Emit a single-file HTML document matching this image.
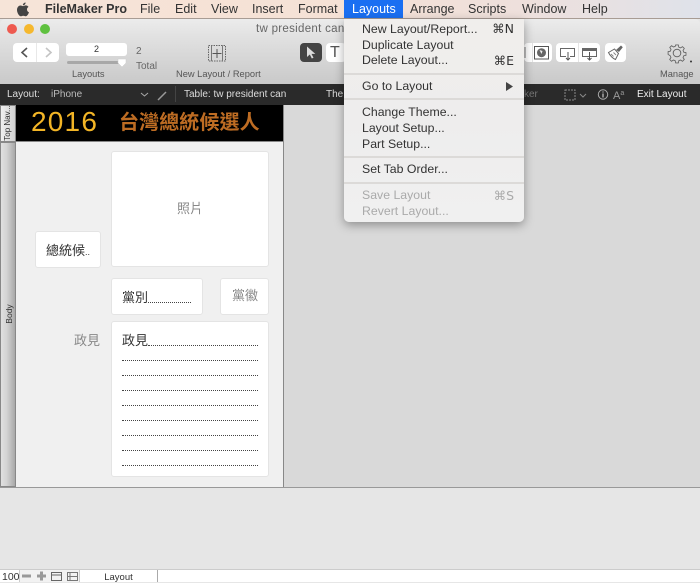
<!DOCTYPE html>
<html><head><meta charset="utf-8">
<style>
html,body{margin:0;padding:0}
body{width:700px;height:582px;position:relative;overflow:hidden;background:#e6e6e6;font-family:"Liberation Sans","Noto Sans CJK TC",sans-serif;}
.a{position:absolute;white-space:nowrap}
.m{position:absolute;top:2px;font-size:12.500px;line-height:15px;color:#333;white-space:nowrap}
.i{position:absolute;left:18px;font-size:12.300px;line-height:15px;color:#333;white-space:nowrap}
.d{color:#aaa}
.s{position:absolute;right:10px;font-size:12.500px;line-height:15px;color:#333;font-family:"DejaVu Sans","Liberation Sans",sans-serif}
.sep{position:absolute;left:0;width:180px;height:2px;background:#dcdad8}
.box{position:absolute;background:#fff;border:1px solid #e4e4e4;border-radius:3px;box-sizing:border-box}
.cj{font-family:"Liberation Sans","Noto Sans CJK TC",sans-serif}
.dots{position:absolute;height:0;border-top:1px dotted #444;}
.tb{position:absolute;background:#fff;border-radius:4px}
</style></head>
<body>
<!-- menu bar -->
<div class="a" style="left:0;top:0;width:700px;height:18px;background:linear-gradient(90deg,#f6e4d8,#f5e1d5 50%,#eee0dc 75%,#dfe2ea)"></div>
<div class="a" style="left:0;top:18px;width:700px;height:1px;background:#a89c94"></div>
<svg class="a" style="left:16px;top:2px" width="14" height="15" viewBox="0 0 14 15"><path d="M9.600 0.500c0.100 1.300-1.100 2.900-2.700 2.800C6.700 1.900 8.100 0.600 9.600 0.500zM7 4.100c0.800 0 1.500-0.700 2.800-0.700 1 0 2 0.500 2.700 1.500-2.300 1.300-1.900 4.500 0.500 5.500-0.600 1.500-1.800 3.900-3.200 3.900-1 0-1.300-0.600-2.500-0.600-1.200 0-1.600 0.600-2.500 0.600C3.200 14.300 1 10.800 1 8c0-2.800 1.800-4.500 3.500-4.500 1 0 1.800 0.600 2.500 0.600z" fill="#444"/></svg>
<div class="m" style="left:45px;font-weight:bold">FileMaker Pro</div>
<div class="m" style="left:140px">File</div>
<div class="m" style="left:175px">Edit</div>
<div class="m" style="left:211px">View</div>
<div class="m" style="left:252px">Insert</div>
<div class="m" style="left:298px">Format</div>
<div class="a" style="left:344px;top:0;width:59px;height:18px;background:#1a6ff2"></div>
<div class="m" style="left:352px;color:#fff">Layouts</div>
<div class="m" style="left:410px">Arrange</div>
<div class="m" style="left:468px">Scripts</div>
<div class="m" style="left:522px">Window</div>
<div class="m" style="left:582px">Help</div>

<!-- toolbar -->
<div class="a" style="left:0;top:19px;width:700px;height:65px;background:linear-gradient(#ececec,#e2e2e2 25%,#c9c9c9);border-radius:5px 5px 0 0"></div>
<div class="a" style="left:7px;top:24px;width:10px;height:10px;border-radius:50%;background:#ee5a50"></div>
<div class="a" style="left:24px;top:24px;width:10px;height:10px;border-radius:50%;background:#f5b82e"></div>
<div class="a" style="left:40px;top:24px;width:10px;height:10px;border-radius:50%;background:#5fc13f"></div>
<div class="a" style="left:256px;top:22px;font-size:11.500px;line-height:14px;color:#666;letter-spacing:.3px">tw president cand</div>

<div class="tb" style="left:13px;top:43px;width:46px;height:19px"></div>
<div class="a" style="left:36px;top:43px;width:1px;height:19px;background:#e8e8e8"></div>
<svg class="a" style="left:13px;top:43px" width="46" height="19"><path d="M14 5l-5 4.500 5 4.500" fill="none" stroke="#555" stroke-width="1.600"/><path d="M33 5l5 4.500-5 4.500" fill="none" stroke="#c4c4c4" stroke-width="1.600"/></svg>
<div class="tb" style="left:66px;top:43px;width:61px;height:13px;border-radius:3px"></div>
<div class="a" style="left:66px;top:44px;width:61px;text-align:center;font-size:9px;line-height:11px;color:#333">2</div>
<div class="a" style="left:67px;top:61px;width:55px;height:3px;background:#a8a8a8;border-radius:2px"></div>
<svg class="a" style="left:117px;top:58px" width="10" height="10"><path d="M1 1h8v4l-4 4-4-4z" fill="#fff" stroke="#ccc" stroke-width=".5"/></svg>
<div class="a" style="left:136px;top:44px;font-size:10px;line-height:15px;color:#666">2<br>Total</div>
<div class="a" style="left:72px;top:68px;font-size:9.300px;line-height:12px;color:#555">Layouts</div>
<svg class="a" style="left:208px;top:45px" width="19" height="17"><rect x=".5" y=".5" width="17" height="15.500" fill="none" stroke="#666" stroke-dasharray="1.500 1"/><path d="M3.500 .5v15.500M14.500 .5v15.500" stroke="#777" fill="none"/><path d="M9 4v9M4.500 8.500h9" stroke="#555" fill="none"/></svg>
<div class="a" style="left:176px;top:68px;font-size:9.300px;line-height:12px;color:#555">New Layout / Report</div>

<div class="a" style="left:300px;top:43px;width:22px;height:19px;background:#444;border-radius:4px"></div>
<svg class="a" style="left:300px;top:43px" width="22" height="19"><path d="M7 3.500v10.500l2.800-2.500 2 4 1.700-.8-2-3.800h3.800z" fill="#ddd"/></svg>
<div class="tb" style="left:326px;top:43px;width:20px;height:19px"></div>
<div class="a" style="left:330px;top:43px;font-size:16px;line-height:19px;color:#555">T</div>

<div class="tb" style="left:524px;top:43px;width:28px;height:19px"></div>
<div class="a" style="left:532px;top:43px;width:1px;height:19px;background:#e4e4e4"></div>
<svg class="a" style="left:524px;top:43px" width="28" height="19"><path d="M1 4v11" stroke="#777" fill="none"/><rect x="10.500" y="3.500" width="14" height="12.500" fill="none" stroke="#555"/><circle cx="17.500" cy="9.700" r="4.500" fill="#666"/><path d="M15.500 7l3 1-1 3z" fill="#eee"/></svg>
<div class="tb" style="left:556px;top:43px;width:44px;height:19px"></div>
<div class="a" style="left:578px;top:43px;width:1px;height:19px;background:#e4e4e4"></div>
<svg class="a" style="left:556px;top:43px" width="44" height="19"><path d="M14 13.500h4.500v-8h-14v8H10" fill="none" stroke="#666"/><path d="M12 9v8M10 15l2 2 2-2" fill="none" stroke="#555"/><rect x="26.500" y="5.500" width="14" height="8" fill="none" stroke="#666"/><rect x="26.500" y="5.500" width="14" height="2.500" fill="#666"/><path d="M33.500 9v8M31.500 15l2 2 2-2" fill="none" stroke="#555"/></svg>
<div class="tb" style="left:605px;top:43px;width:21px;height:19px"></div>
<svg class="a" style="left:605px;top:43px" width="21" height="19"><path d="M3.500 9.500l6-3.500 4 4.500-3 6c-2.500-.8-5.500-3.800-7-7z" fill="none" stroke="#666"/><path d="M11 7l5-4.500 1.800 1.700L14 9z" fill="#666"/><path d="M6 11l2.500 2.500M8.500 9.500l2.500 2.500" stroke="#888"/></svg>

<svg class="a" style="left:667px;top:43px" width="26" height="22" viewBox="0 0 26 22"><circle cx="10" cy="10" r="3.800" fill="none" stroke="#666"/><path d="M8.500 1h3l.5 2.500 2 .8 2.200-1.400 2 2-1.400 2.200.8 2 2.500.5v3l-2.500.5-.8 2 1.400 2.200-2 2-2.200-1.400-2 .8-.5 2.500h-3l-.5-2.500-2-.8-2.200 1.400-2-2 1.400-2.200-.8-2L0 11.500v-3l2.500-.5.8-2-1.400-2.200 2-2 2.200 1.400 2-.8z" transform="translate(1.100 1.100) scale(.89)" fill="none" stroke="#666"/><circle cx="24" cy="18.500" r="1" fill="#333"/></svg>
<div class="a" style="left:660px;top:68px;font-size:9.300px;line-height:12px;color:#555">Manage</div>

<!-- dark bar -->
<div class="a" style="left:0;top:84px;width:700px;height:21px;background:#2a2a2a"></div>
<div class="a" style="left:7px;top:89px;font-size:10px;line-height:12px;color:#ddd">Layout:</div>
<div class="a" style="left:51px;top:89px;font-size:10px;line-height:12px;color:#bbb">iPhone</div>
<svg class="a" style="left:140px;top:88px" width="30" height="14"><path d="M1 5l3.500 3 3.500-3" fill="none" stroke="#aaa"/><path d="M18 12l8-8" stroke="#999" stroke-width="1.500"/></svg>
<div class="a" style="left:175px;top:86px;width:1px;height:16px;background:#444"></div>
<div class="a" style="left:184px;top:89px;font-size:10px;line-height:12px;color:#ddd">Table: tw president can</div>
<div class="a" style="left:326px;top:89px;font-size:10px;line-height:12px;color:#ddd">The</div>
<div class="a" style="left:524px;top:89px;font-size:10px;line-height:12px;color:#777">ker</div>
<svg class="a" style="left:564px;top:88px" width="26" height="14"><rect x="1" y="2" width="10" height="10" fill="none" stroke="#888" stroke-dasharray="2 1"/><path d="M16 6l3 3 3-3" fill="none" stroke="#888"/></svg>
<svg class="a" style="left:597px;top:88px" width="12" height="13"><circle cx="6" cy="6.500" r="4.700" fill="none" stroke="#aaa"/><path d="M6 5.500v4M6 3.500v1" stroke="#bbb" stroke-width="1.300"/></svg>
<div class="a" style="left:613px;top:87px;font-size:11px;line-height:14px;color:#999">A<span style="font-size:7px;vertical-align:4px">a</span></div>
<div class="a" style="left:637px;top:89px;font-size:10px;line-height:12px;color:#eee">Exit Layout</div>

<!-- canvas -->
<div class="a" style="left:0;top:105px;width:700px;height:383px;background:#d9d9d9"></div>
<div class="a" style="left:0;top:488px;width:700px;height:82px;background:#e6e6e6"></div>
<div class="a" style="left:0;top:487px;width:700px;height:1px;background:#999"></div>
<!-- part tabs -->
<div class="a" style="left:0;top:105px;width:16px;height:37px;background:linear-gradient(90deg,#f0f0f0,#d0d0d0);border:1px solid #888;box-sizing:border-box"></div>
<div class="a" style="left:0;top:142px;width:16px;height:345px;background:linear-gradient(90deg,#e0e0e0,#d4d4d4 40%,#a8a8a8);border:1px solid #888;box-sizing:border-box"></div>
<div class="a" style="left:-12px;top:118px;width:40px;text-align:center;transform:rotate(-90deg);font-size:8px;line-height:10px;color:#333;">Top Nav...</div>
<div class="a" style="left:-11px;top:309px;width:40px;text-align:center;transform:rotate(-90deg);font-size:8.500px;line-height:10px;color:#333;">Body</div>
<!-- layout -->
<div class="a" style="left:16px;top:105px;width:267px;height:382px;background:#f0f0f0;border-right:1px solid #888;box-sizing:content-box"></div>
<div class="a" style="left:16px;top:105px;width:267px;height:36px;background:#000"></div>
<div class="a" style="left:16px;top:141px;width:267px;height:1px;background:#888"></div>
<div class="a" style="left:31px;top:105px;font-size:28px;line-height:34px;color:#f3b526;letter-spacing:1.200px">2016</div>
<div class="a cj" style="left:119px;top:110px;font-size:20px;line-height:27px;color:#bd6c23;font-weight:bold;letter-spacing:.1px">台灣總統候選人</div>

<div class="box" style="left:111px;top:151px;width:158px;height:116px"></div>
<div class="a cj" style="left:177px;top:200px;font-size:13px;line-height:18px;color:#888">照片</div>
<div class="box" style="left:35px;top:231px;width:66px;height:37px"></div>
<div class="a cj" style="left:46px;top:242px;font-size:13px;line-height:18px;color:#333">總統候<span style="font-size:9px">..</span></div>
<div class="box" style="left:111px;top:278px;width:92px;height:37px"></div>
<div class="a cj" style="left:122px;top:289px;font-size:13px;line-height:18px;color:#333">黨別</div>
<div class="dots" style="left:148px;top:302px;width:43px"></div>
<div class="box" style="left:220px;top:278px;width:49px;height:37px"></div>
<div class="a cj" style="left:232px;top:287px;font-size:13px;line-height:18px;color:#888">黨徽</div>
<div class="a cj" style="left:74px;top:332px;font-size:13px;line-height:18px;color:#888">政見</div>
<div class="box" style="left:111px;top:321px;width:158px;height:156px"></div>
<div class="a cj" style="left:122px;top:332px;font-size:13px;line-height:18px;color:#333">政見</div>
<div class="dots" style="left:148px;top:345px;width:110px"></div>
<div class="dots" style="left:122px;top:360px;width:136px"></div>
<div class="dots" style="left:122px;top:375px;width:136px"></div>
<div class="dots" style="left:122px;top:390px;width:136px"></div>
<div class="dots" style="left:122px;top:405px;width:136px"></div>
<div class="dots" style="left:122px;top:420px;width:136px"></div>
<div class="dots" style="left:122px;top:435px;width:136px"></div>
<div class="dots" style="left:122px;top:450px;width:136px"></div>
<div class="dots" style="left:122px;top:465px;width:136px"></div>

<!-- status bar -->
<div class="a" style="left:0;top:569px;width:700px;height:13px;background:#fff;border-top:1px solid #ccc;box-sizing:border-box"></div>
<div class="a" style="left:2px;top:571px;font-size:10.500px;line-height:12px;color:#333">100</div>
<div class="a" style="left:19px;top:570px;width:61px;height:12px;background:#f2f2f2;border-left:1px solid #ccc;box-sizing:border-box"></div>
<svg class="a" style="left:20px;top:570px" width="60" height="12"><rect x="2" y="4.500" width="9" height="3" fill="#999"/><path d="M20 1.500h3v3h3v3h-3v3h-3v-3h-3v-3h3z" fill="#999"/><rect x="31.500" y="2.500" width="10" height="8" fill="none" stroke="#666"/><path d="M31.500 5h10" stroke="#666"/><rect x="47.500" y="2.500" width="10" height="8" fill="none" stroke="#777"/><path d="M47.500 6.500h10M50 2.500v8" stroke="#777"/></svg>
<div class="a" style="left:79px;top:570px;width:79px;height:12px;background:#fff;border-left:1px solid #ccc;border-right:1px solid #aaa;box-sizing:border-box;text-align:center;font-size:9.500px;line-height:13px;padding-top:0;color:#333"><span style="position:relative;top:1px">Layout</span></div>

<!-- dropdown menu -->
<div class="a" style="left:344px;top:19px;width:180px;height:203px;background:linear-gradient(#f0eeec,#eeeded 50%,#f0f0f0);border-radius:0 0 5px 5px;box-shadow:0 3px 10px rgba(0,0,0,.35)">
<div class="i" style="top:3px">New Layout/Report...</div><div class="s" style="top:2px">⌘N</div>
<div class="i" style="top:19px">Duplicate Layout</div>
<div class="i" style="top:34px">Delete Layout...</div><div class="s" style="top:34px">⌘E</div>
<div class="sep" style="top:54px"></div>
<div class="i" style="top:60px">Go to Layout</div>
<svg class="a" style="left:162px;top:63px" width="8" height="9"><path d="M0 0l7 4.500-7 4.500z" fill="#444"/></svg>
<div class="sep" style="top:79px"></div>
<div class="i" style="top:86px">Change Theme...</div>
<div class="i" style="top:102px">Layout Setup...</div>
<div class="i" style="top:118px">Part Setup...</div>
<div class="sep" style="top:137px"></div>
<div class="i" style="top:143px">Set Tab Order...</div>
<div class="sep" style="top:163px"></div>
<div class="i d" style="top:169px">Save Layout</div><div class="s d" style="top:169px;color:#aaa">⌘S</div>
<div class="i d" style="top:185px">Revert Layout...</div>
</div>
</body></html>
